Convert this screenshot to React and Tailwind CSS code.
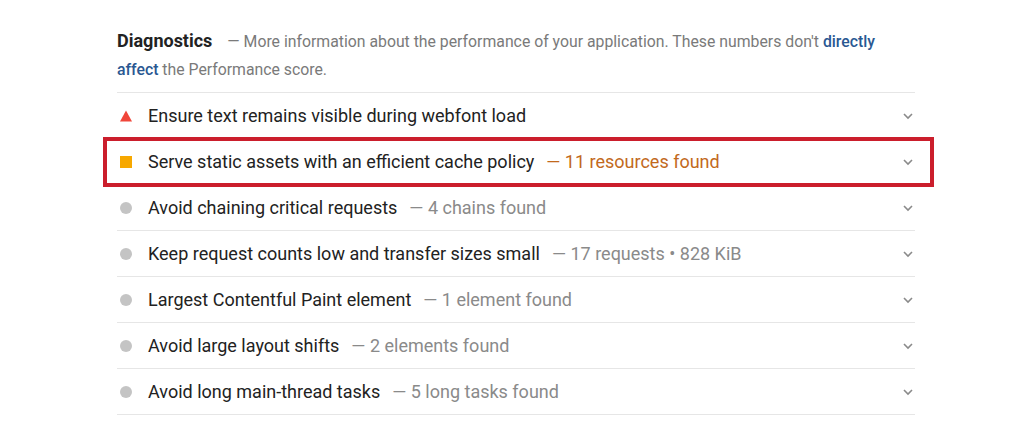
const audits = [
  { icon: 'fail', title: 'Ensure text remains visible during webfont load' },
  {
    icon: 'average',
    title: 'Serve static assets with an efficient cache policy',
    value: '11 resources found',
    boxed: true,
  },
  { icon: 'info', title: 'Avoid chaining critical requests', value: '4 chains found' },
  {
    icon: 'info',
    title: 'Keep request counts low and transfer sizes small',
    value: '17 requests • 828 KiB',
  },
  { icon: 'info', title: 'Largest Contentful Paint element', value: '1 element found' },
  { icon: 'info', title: 'Avoid large layout shifts', value: '2 elements found' },
  { icon: 'info', title: 'Avoid long main-thread tasks', value: '5 long tasks found' },
];

const StatusIcon = ({ type }) => {
  if (type === 'fail') {
    return (
      <svg width="12" height="12" viewBox="0 0 12 12" className="shrink-0">
        <polygon points="6,0.5 12,11.5 0,11.5" fill="#f0463a" />
      </svg>
    );
  }
  if (type === 'average') {
    return <span className="h-3 w-3 shrink-0 bg-[#f7a800]" />;
  }
  return <span className="h-3 w-3 shrink-0 rounded-full bg-[#c4c4c4]" />;
};

const Chevron = () => (
  <svg width="12" height="8" viewBox="0 0 12 8" className="ml-auto shrink-0">
    <path d="M2 2l4 4 4-4" fill="none" stroke="#8a8a8a" strokeWidth="1.6" />
  </svg>
);

const AuditRow = ({ audit }) => (
  <div className="relative flex h-[46px] items-center border-t border-[#e6e6e6] pl-[3px] pr-[1px]">
    <StatusIcon type={audit.icon} />
    <span className="ml-4 text-[18px] text-[#222222]">{audit.title}</span>
    {audit.value && (
      <span
        className={
          audit.boxed
            ? 'ml-[12px] text-[18px] text-[#c2691c]'
            : 'ml-[12px] text-[18px] text-[#8a8a8a]'
        }
      >
        — {audit.value}
      </span>
    )}
    <Chevron />
    {audit.boxed && (
      <div className="pointer-events-none absolute -top-[2px] -bottom-[3px] -left-[14px] -right-[19px] z-10 border-4 border-[#cb1e2c]" />
    )}
  </div>
);

const App = () => {
  return (
    <div
      className="min-h-[441px] w-full bg-white pl-[117px]"
      style={{ fontFamily: 'Roboto, "Liberation Sans", sans-serif' }}
    >
      <div className="w-[798px] pt-[27px]">
        <div className="pb-2 text-[15.8px] leading-[28px] text-[#7a7a7a]">
          <span className="text-[18px] font-bold text-[#222222]">Diagnostics</span>
          <span className="ml-[15px]">
            — More information about the performance of your application. These numbers
            don't <span className="font-medium text-[#2a5892]">directly affect</span> the
            Performance score.
          </span>
        </div>
        <div className="border-b border-[#e6e6e6]">
          {audits.map((audit) => (
            <AuditRow key={audit.title} audit={audit} />
          ))}
        </div>
      </div>
    </div>
  );
};

export default App;
